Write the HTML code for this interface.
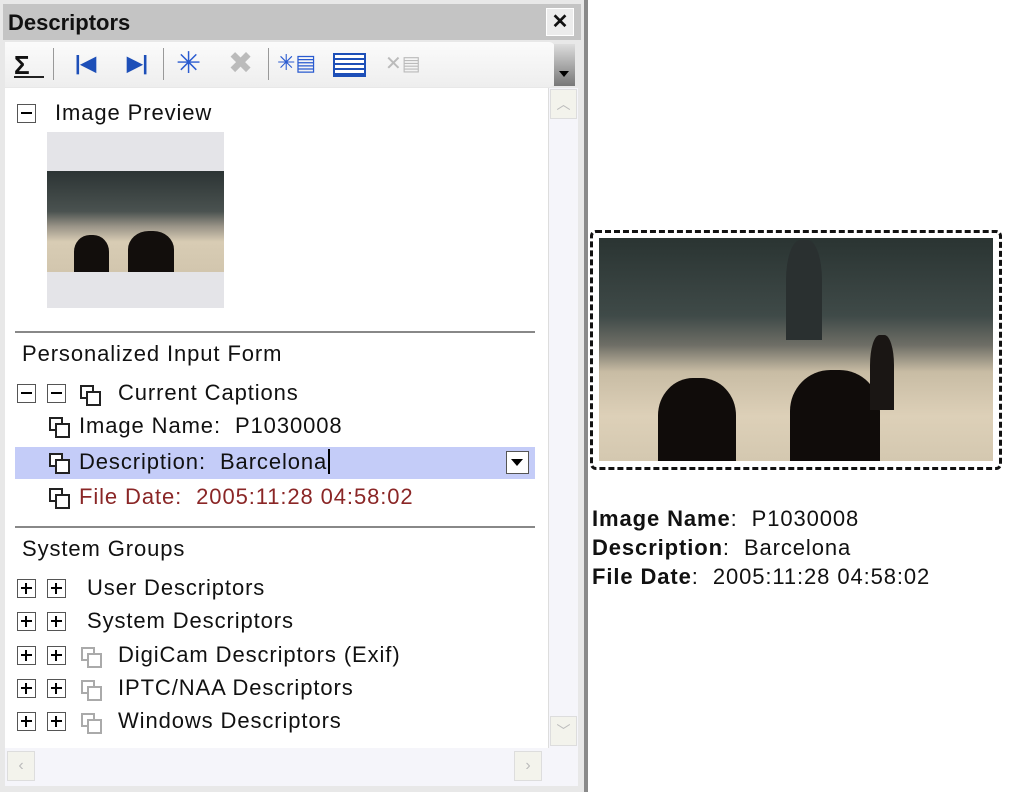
<!DOCTYPE html>
<html><head><meta charset="utf-8"><style>
*{margin:0;padding:0;box-sizing:border-box}
body{width:1020px;height:792px;background:#fff;position:relative;overflow:hidden;font-family:"Liberation Sans",sans-serif;color:#111}
.a{position:absolute}
.t{position:absolute;font-size:22px;white-space:nowrap;letter-spacing:0.9px}
.bx{position:absolute;width:19px;height:19px;border:1.5px solid #555;background:#fff}
.bx:before{content:"";position:absolute;left:3px;right:3px;top:7px;height:2px;background:#000}
.p:after{content:"";position:absolute;top:3px;bottom:3px;left:7px;width:2px;background:#000}
.ic{position:absolute;width:19px;height:19px}
.ic:before{content:"";position:absolute;left:1px;top:1px;width:10px;height:10px;border:2px solid #222;background:#fff}
.ic:after{content:"";position:absolute;left:7px;top:7px;width:11px;height:11px;border:2px solid #222;background:#fff}
.ic.g:before,.ic.g:after{border-color:#aaa}
</style></head><body>
<div class="a" style="left:0;top:0;width:588px;height:792px;background:#e8e8e8;border-right:4px solid #8a8a8a"></div>
<div class="a" style="left:3px;top:4px;width:578px;height:36px;background:#c4c4c4"></div>
<div class="t" style="left:8px;top:10px;font-weight:bold;font-size:22px;letter-spacing:0">Descriptors</div>
<div class="a" style="left:546px;top:8px;width:28px;height:28px;background:#ececec;border:1px solid #fff;font:bold 20px 'Liberation Sans';text-align:center;line-height:26px">✕</div>
<div class="a" style="left:5px;top:42px;width:550px;height:45px;background:linear-gradient(#fbfbfb,#eeeeee);border-radius:0 6px 6px 0"></div>
<div class="a" style="left:554px;top:44px;width:21px;height:42px;background:linear-gradient(#ddd,#777)"></div>
<div class="a" style="left:559px;top:71px;border:5px solid transparent;border-top:6px solid #000"></div>
<div class="t" style="left:14px;top:50px;font-size:26px;font-weight:bold">Σ</div>
<div class="a" style="left:14px;top:76px;width:30px;height:2px;background:#222"></div>
<div class="a" style="left:53px;top:48px;width:1px;height:32px;background:#999"></div>
<div class="t" style="left:75px;top:51px;color:#1d4fb8;font-weight:bold;font-size:20px;letter-spacing:0">|◀</div>
<div class="t" style="left:127px;top:51px;color:#1d4fb8;font-weight:bold;font-size:20px;letter-spacing:0">▶|</div>
<div class="a" style="left:163px;top:48px;width:1px;height:32px;background:#999"></div>
<div class="t" style="left:176px;top:46px;color:#2a5bd0;font-size:30px">✳</div>
<div class="t" style="left:228px;top:46px;color:#bbb;font-size:30px">✖</div>
<div class="a" style="left:268px;top:48px;width:1px;height:32px;background:#999"></div>
<div class="t" style="left:277px;top:50px;color:#2a5bd0;font-size:22px;letter-spacing:0">✳▤</div>
<div class="a" style="left:333px;top:53px;width:33px;height:24px;border:2px solid #1d4fb8;background:repeating-linear-gradient(#fff 0 3px,#1d4fb8 3px 5px)"></div>
<div class="t" style="left:385px;top:51px;color:#bbb;font-size:20px;letter-spacing:0">✕▤</div>
<div class="a" style="left:5px;top:88px;width:543px;height:660px;background:#fff"></div>
<div class="a" style="left:548px;top:88px;width:30px;height:660px;background:#f5f5fa;border-left:1px solid #ddd"></div>
<div class="a" style="left:550px;top:89px;width:27px;height:30px;background:#f3f3ec;border:1px solid #ddd;color:#bbb;text-align:center;font-size:14px;line-height:28px">︿</div>
<div class="a" style="left:550px;top:716px;width:27px;height:30px;background:#f3f3ec;border:1px solid #ddd;color:#bbb;text-align:center;font-size:14px;line-height:28px">﹀</div>
<div class="a" style="left:5px;top:748px;width:573px;height:38px;background:#f5f5fa"></div>
<div class="a" style="left:7px;top:751px;width:28px;height:30px;background:#f3f3ec;border:1px solid #ddd;color:#bbb;text-align:center;line-height:28px">‹</div>
<div class="a" style="left:514px;top:751px;width:28px;height:30px;background:#f3f3ec;border:1px solid #ddd;color:#bbb;text-align:center;line-height:28px">›</div>

<div class="bx" style="left:17px;top:104px"></div>
<div class="t" style="left:55px;top:100px">Image Preview</div>
<div class="a" style="left:47px;top:132px;width:177px;height:176px;background:#e4e4e8"></div>
<div class="a" style="left:47px;top:171px;width:177px;height:101px;background:linear-gradient(#2c3434 0%,#4a5250 40%,#9a9488 55%,#d8ccb4 70%,#d2c6ae 100%)"></div>
<div class="a" style="left:74px;top:235px;width:35px;height:37px;background:#120e0c;border-radius:45% 45% 0 0"></div>
<div class="a" style="left:128px;top:231px;width:46px;height:41px;background:#120e0c;border-radius:45% 45% 0 0"></div>

<div class="a" style="left:15px;top:331px;width:520px;height:2px;background:#888"></div>
<div class="t" style="left:22px;top:341px">Personalized Input Form</div>
<div class="bx" style="left:17px;top:384px"></div>
<div class="bx" style="left:47px;top:384px"></div>
<div class="ic" style="left:79px;top:384px"></div>
<div class="t" style="left:118px;top:380px">Current Captions</div>
<div class="ic" style="left:48px;top:416px"></div>
<div class="t" style="left:79px;top:413px">Image Name:&nbsp; P1030008</div>
<div class="a" style="left:15px;top:447px;width:520px;height:32px;background:#c4ccf8"></div>
<div class="ic" style="left:48px;top:452px"></div>
<div class="t" style="left:79px;top:449px">Description:&nbsp; Barcelona<span style="border-left:2px solid #000;margin-left:1px"></span></div>
<div class="a" style="left:506px;top:451px;width:23px;height:23px;background:#fff;border:1.5px solid #555"></div>
<div class="a" style="left:511px;top:459px;border:6px solid transparent;border-top:7px solid #000"></div>
<div class="ic" style="left:48px;top:487px"></div>
<div class="t" style="left:79px;top:484px;color:#8a2626">File Date:&nbsp; 2005:11:28 04:58:02</div>

<div class="a" style="left:15px;top:526px;width:520px;height:2px;background:#888"></div>
<div class="t" style="left:22px;top:536px">System Groups</div>
<div class="bx p" style="left:17px;top:579px"></div><div class="bx p" style="left:47px;top:579px"></div>
<div class="t" style="left:87px;top:575px">User Descriptors</div>
<div class="bx p" style="left:17px;top:612px"></div><div class="bx p" style="left:47px;top:612px"></div>
<div class="t" style="left:87px;top:608px">System Descriptors</div>
<div class="bx p" style="left:17px;top:646px"></div><div class="bx p" style="left:47px;top:646px"></div><div class="ic g" style="left:80px;top:646px"></div>
<div class="t" style="left:118px;top:642px">DigiCam Descriptors (Exif)</div>
<div class="bx p" style="left:17px;top:679px"></div><div class="bx p" style="left:47px;top:679px"></div><div class="ic g" style="left:80px;top:679px"></div>
<div class="t" style="left:118px;top:675px">IPTC/NAA Descriptors</div>
<div class="bx p" style="left:17px;top:712px"></div><div class="bx p" style="left:47px;top:712px"></div><div class="ic g" style="left:80px;top:712px"></div>
<div class="t" style="left:118px;top:708px">Windows Descriptors</div>

<div class="a" style="left:590px;top:230px;width:412px;height:240px;border:3px dashed #111;border-radius:6px"></div>
<div class="a" style="left:599px;top:238px;width:394px;height:223px;background:linear-gradient(#2a3432 0%,#3f4a48 35%,#6e6e66 48%,#c8bca4 60%,#ddd0b8 80%,#d4c8b0 100%)"></div>
<div class="a" style="left:786px;top:240px;width:36px;height:100px;background:#2a3030;border-radius:40% 40% 0 0"></div>
<div class="a" style="left:658px;top:378px;width:78px;height:83px;background:#100c0a;border-radius:45% 45% 0 0"></div>
<div class="a" style="left:790px;top:370px;width:90px;height:91px;background:#100c0a;border-radius:45% 45% 0 0"></div>
<div class="a" style="left:870px;top:335px;width:24px;height:75px;background:#1a1614;border-radius:40% 40% 0 0"></div>
<div class="t" style="left:592px;top:506px"><b>Image Name</b>:&nbsp; P1030008</div>
<div class="t" style="left:592px;top:535px"><b>Description</b>:&nbsp; Barcelona</div>
<div class="t" style="left:592px;top:564px"><b>File Date</b>:&nbsp; 2005:11:28 04:58:02</div>
</body></html>
